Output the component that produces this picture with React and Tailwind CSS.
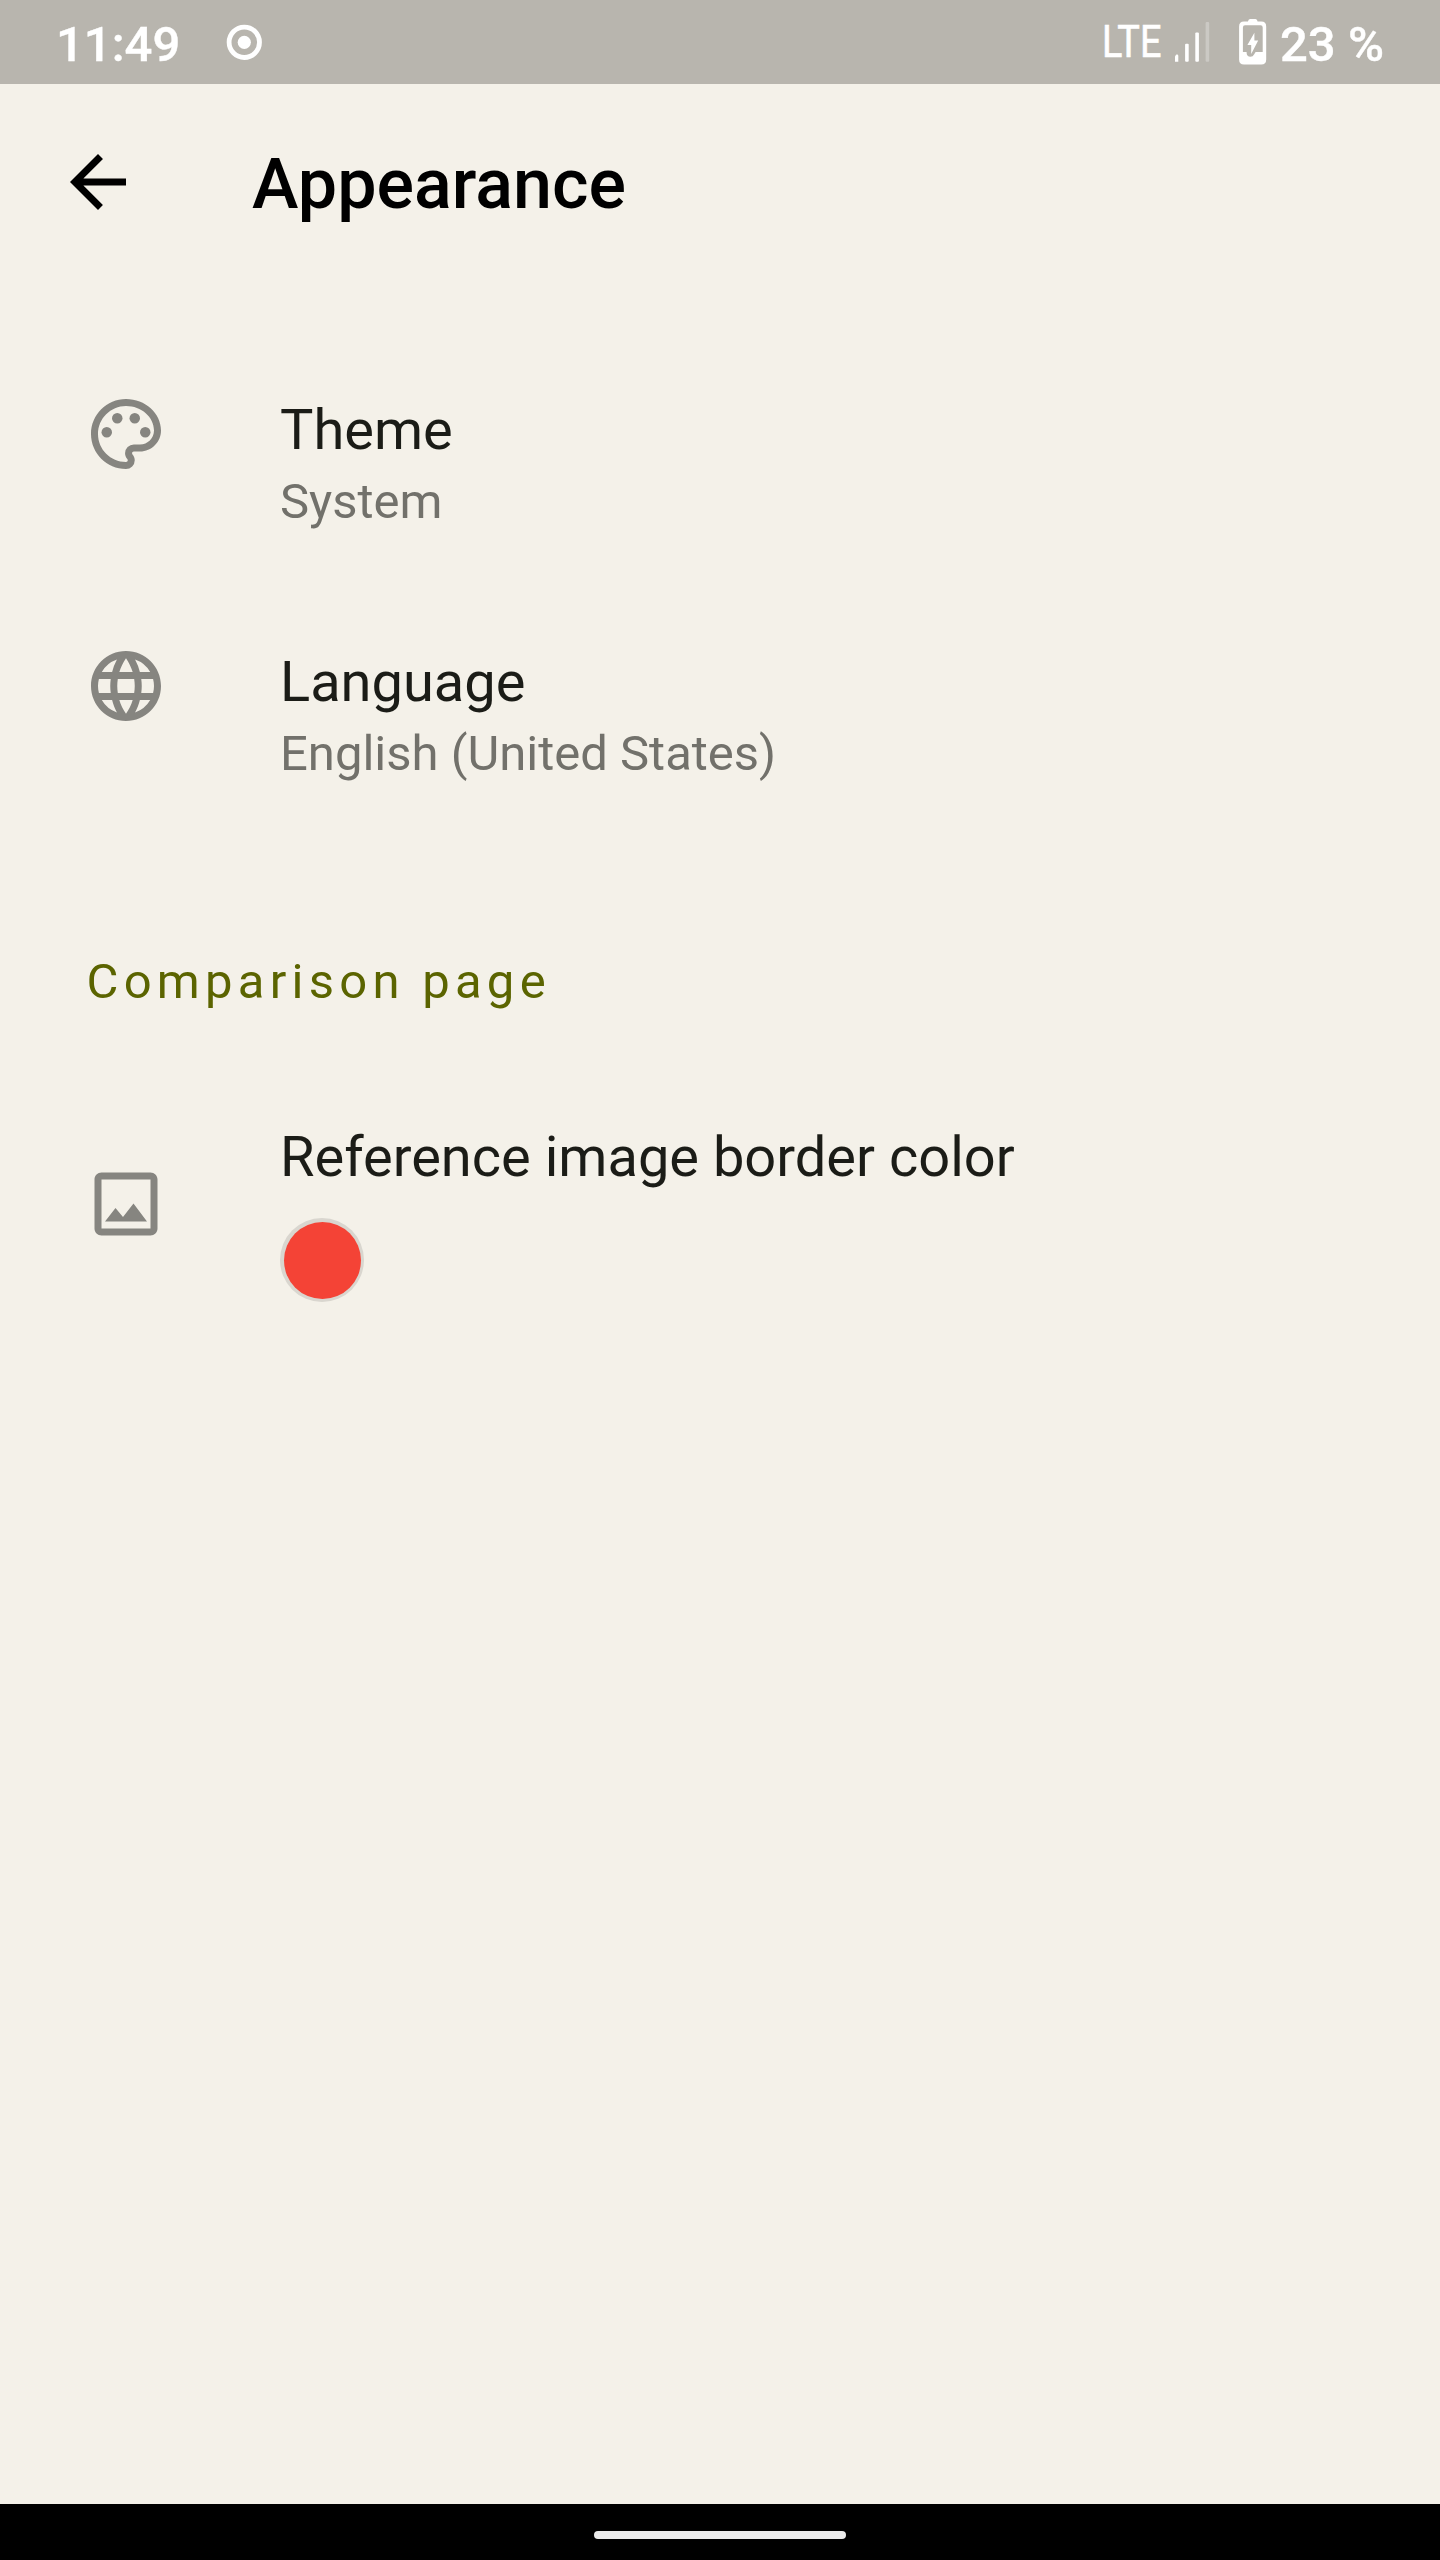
import React from "react";
import { MdArrowBack, MdOutlinePalette, MdLanguage, MdOutlineImage } from "react-icons/md";

function RecordIcon() {
  return (
    <svg className="ml-[46px] mt-[24px] h-9 w-9" viewBox="0 0 36 36">
      <circle cx="18.3" cy="18.3" r="15.2" fill="none" stroke="#fff" strokeWidth="4.8" />
      <circle cx="18.3" cy="18.3" r="6.6" fill="#fff" />
    </svg>
  );
}

function SignalIcon() {
  return (
    <svg className="mt-[21px] h-[42px] w-[36px]" viewBox="0 0 36 42" fill="#fff">
      <path d="M0 35.3 L1.4 33.6 H2 Q3.3 33.6 3.3 35 V40.8 H0 Z" />
      <rect x="10.1" y="22.7" width="3.6" height="18.1" rx="1" />
      <rect x="20.3" y="11.5" width="3.6" height="29.3" rx="1" />
      <rect x="30.6" y="1" width="3.6" height="39.8" rx="1" opacity="0.27" />
    </svg>
  );
}

function BatteryIcon() {
  return (
    <svg className="mt-[19px] h-[46px] w-[28px]" viewBox="0 0 28 46">
      <path
        fill="#fff"
        fillRule="evenodd"
        d="M11 0 H16.5 Q18.3 0 18.6 2.6 H22.3 Q27.2 2.6 27.2 7.5 V40.6 Q27.2 45.6 22.3 45.6 H5 Q0.1 45.6 0.1 40.6 V7.5 Q0.1 2.6 5 2.6 H9 Q9.3 0 11 0 Z M6 6.2 Q3.9 6.2 3.9 8.4 V33 H7.6 V34 Q7.8 37.6 11.4 37.8 Q14 37.8 15.2 35.2 L16.6 33 H23.7 V8.4 Q23.7 6.2 21.6 6.2 Z"
      />
      <path fill="#fff" d="M15.4 13.7 V21.5 H19.2 L12.2 35 V26 H8.4 Z" />
    </svg>
  );
}

function StatusBar() {
  return (
    <div className="flex h-[84px] items-start bg-[#b8b5ae] text-[49px] font-medium leading-[57px] text-white [-webkit-text-stroke:0.4px_white]">
      <span className="ml-14 mt-4 w-[124px] whitespace-nowrap">11:49</span>
      <RecordIcon />
      <div className="ml-auto flex items-start">
        <span className="mt-4 w-[73px] origin-left scale-x-[0.86] text-[44px] font-normal leading-[52px] [-webkit-text-stroke:0.6px_white]">
          LTE
        </span>
        <SignalIcon />
        <div className="w-[28px]" />
        <BatteryIcon />
        <span className="ml-[13px] mr-[55px] mt-4 w-[105px] whitespace-nowrap">23 %</span>
      </div>
    </div>
  );
}

function Setting({ icon: Icon, title, subtitle }) {
  return (
    <div className="flex h-[252px] items-start pl-[84px] pt-7">
      <Icon className="h-[84px] w-[84px] text-[#868580]" />
      <div className="ml-28 mt-[5px] flex flex-col gap-2.5">
        <div className="text-[56px] leading-[66px] text-[#1b1c17]">{title}</div>
        <div className="text-[49px] leading-[57px] text-[#72716b]">{subtitle}</div>
      </div>
    </div>
  );
}

export default function App() {
  return (
    <div className="flex h-[2560px] w-[1440px] flex-col overflow-hidden bg-[#f4f1e9] font-['Roboto',sans-serif]">
      <StatusBar />
      <header className="flex h-[196px] items-start pl-14 pt-14">
        <MdArrowBack className="h-[84px] w-[84px] text-black" />
        <h1 className="ml-28 mt-[3px] text-[70px] font-medium leading-[82px] text-black">Appearance</h1>
      </header>
      <main className="flex-1 pt-[84px]">
        <Setting icon={MdOutlinePalette} title="Theme" subtitle="System" />
        <Setting icon={MdLanguage} title="Language" subtitle="English (United States)" />
        <h2 className="ml-[86.5px] mt-[85px] text-[49px] leading-[57px] tracking-[5.25px] text-[#5b6400]">
          Comparison page
        </h2>
        <div className="mt-[114px] flex items-start pl-[84px]">
          <MdOutlineImage className="mt-[38px] h-[84px] w-[84px] text-[#868580]" />
          <div className="ml-28">
            <div className="text-[56px] leading-[66px] text-[#1b1c17]">Reference image border color</div>
            <div className="mt-7 h-[84px] w-[84px] rounded-full bg-[#d9d6cf] p-[3.5px]">
              <div className="h-full w-full rounded-full bg-[#f44336]" />
            </div>
          </div>
        </div>
      </main>
      <footer className="flex h-14 justify-center bg-black pt-[27px]">
        <div className="h-2 w-[252px] rounded-full bg-[#ececec]" />
      </footer>
    </div>
  );
}
